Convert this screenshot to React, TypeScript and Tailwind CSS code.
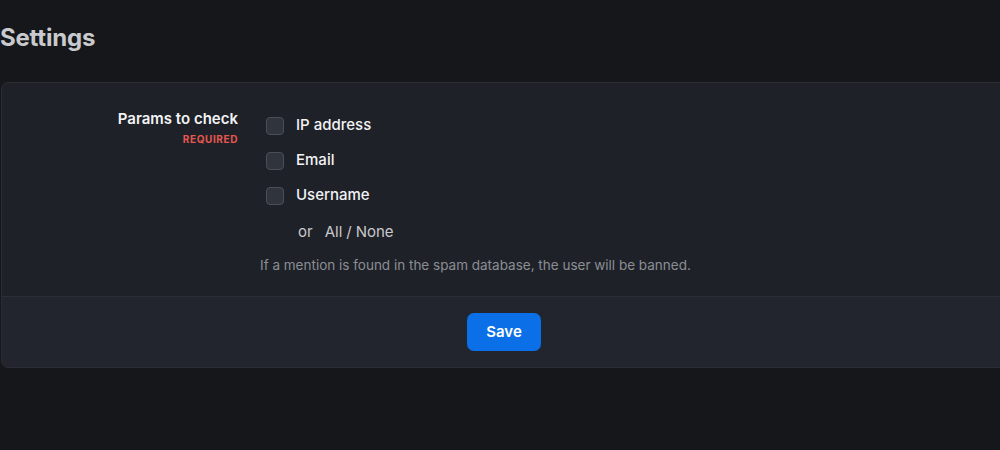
import { useState } from "react";

const params = [
  { id: "ip", label: "IP address" },
  { id: "email", label: "Email" },
  { id: "username", label: "Username" },
];

export default function App() {
  const [checked, setChecked] = useState<Record<string, boolean>>({});

  const setAll = (v: boolean) =>
    setChecked(Object.fromEntries(params.map((p) => [p.id, v])));

  return (
    <div
      className="h-[450px] w-[1000px] overflow-hidden bg-[#16171b] text-white"
      style={{ fontFamily: "Inter, 'Noto Sans', sans-serif" }}
    >
      <h1 className="pt-[24px] text-[24px] font-bold leading-[28px] tracking-[-0.2px] text-[#c9cacd]">
        Settings
      </h1>

      <div className="mt-[30px] ml-px w-[1006px] overflow-hidden rounded-[7px] border border-[#2a2d34] bg-[#1f2128]">
        <div className="flex pt-6 pb-[21px]">
          <div className="w-[236px] shrink-0 pt-[2px] text-right">
            <p className="text-[15px] font-semibold leading-[20px] text-[#f2f3f5]">
              Params to check
            </p>
            <p className="mt-[3px] text-[10px] font-bold uppercase leading-[14px] tracking-[0.6px] text-[#e5574f]">
              Required
            </p>
          </div>

          <div className="ml-[22px] flex-1">
            <div className="mt-px pl-[6px]">
              {params.map((p) => (
                <label
                  key={p.id}
                  className="flex h-[35px] cursor-pointer items-center gap-[12px]"
                >
                  <input
                    type="checkbox"
                    checked={!!checked[p.id]}
                    onChange={(e) =>
                      setChecked((c) => ({ ...c, [p.id]: e.target.checked }))
                    }
                    className="h-[18px] w-[18px] cursor-pointer appearance-none rounded-[4px] border border-[#4a4f57] bg-[#30353d] checked:border-[#0b6fe8] checked:bg-[#0b6fe8]"
                  />
                  <span className="text-[15px] font-medium text-[#f2f3f5]">
                    {p.label}
                  </span>
                </label>
              ))}
              <div className="flex h-[38px] items-center pl-[32px] text-[15px] text-[#c8c9cc]">
                <span>or</span>
                <button
                  type="button"
                  onClick={() => setAll(true)}
                  className="ml-[12px] hover:text-white"
                >
                  All
                </button>
                <span className="mx-[4px]">/</span>
                <button
                  type="button"
                  onClick={() => setAll(false)}
                  className="hover:text-white"
                >
                  None
                </button>
              </div>
            </div>
            <p className="mt-[4px] text-[13.5px] leading-[20px] text-[#8b8e95]">
              If a mention is found in the spam database, the user will be banned.
            </p>
          </div>
        </div>

        <div className="flex justify-center border-t border-[#2b2e35] bg-[#22252d] py-4">
          <button
            type="button"
            className="h-[38px] rounded-[7px] bg-[#0b6fe8] px-[19px] text-[15px] font-semibold text-white hover:bg-[#1a7cf2]"
          >
            Save
          </button>
        </div>
      </div>
    </div>
  );
}
